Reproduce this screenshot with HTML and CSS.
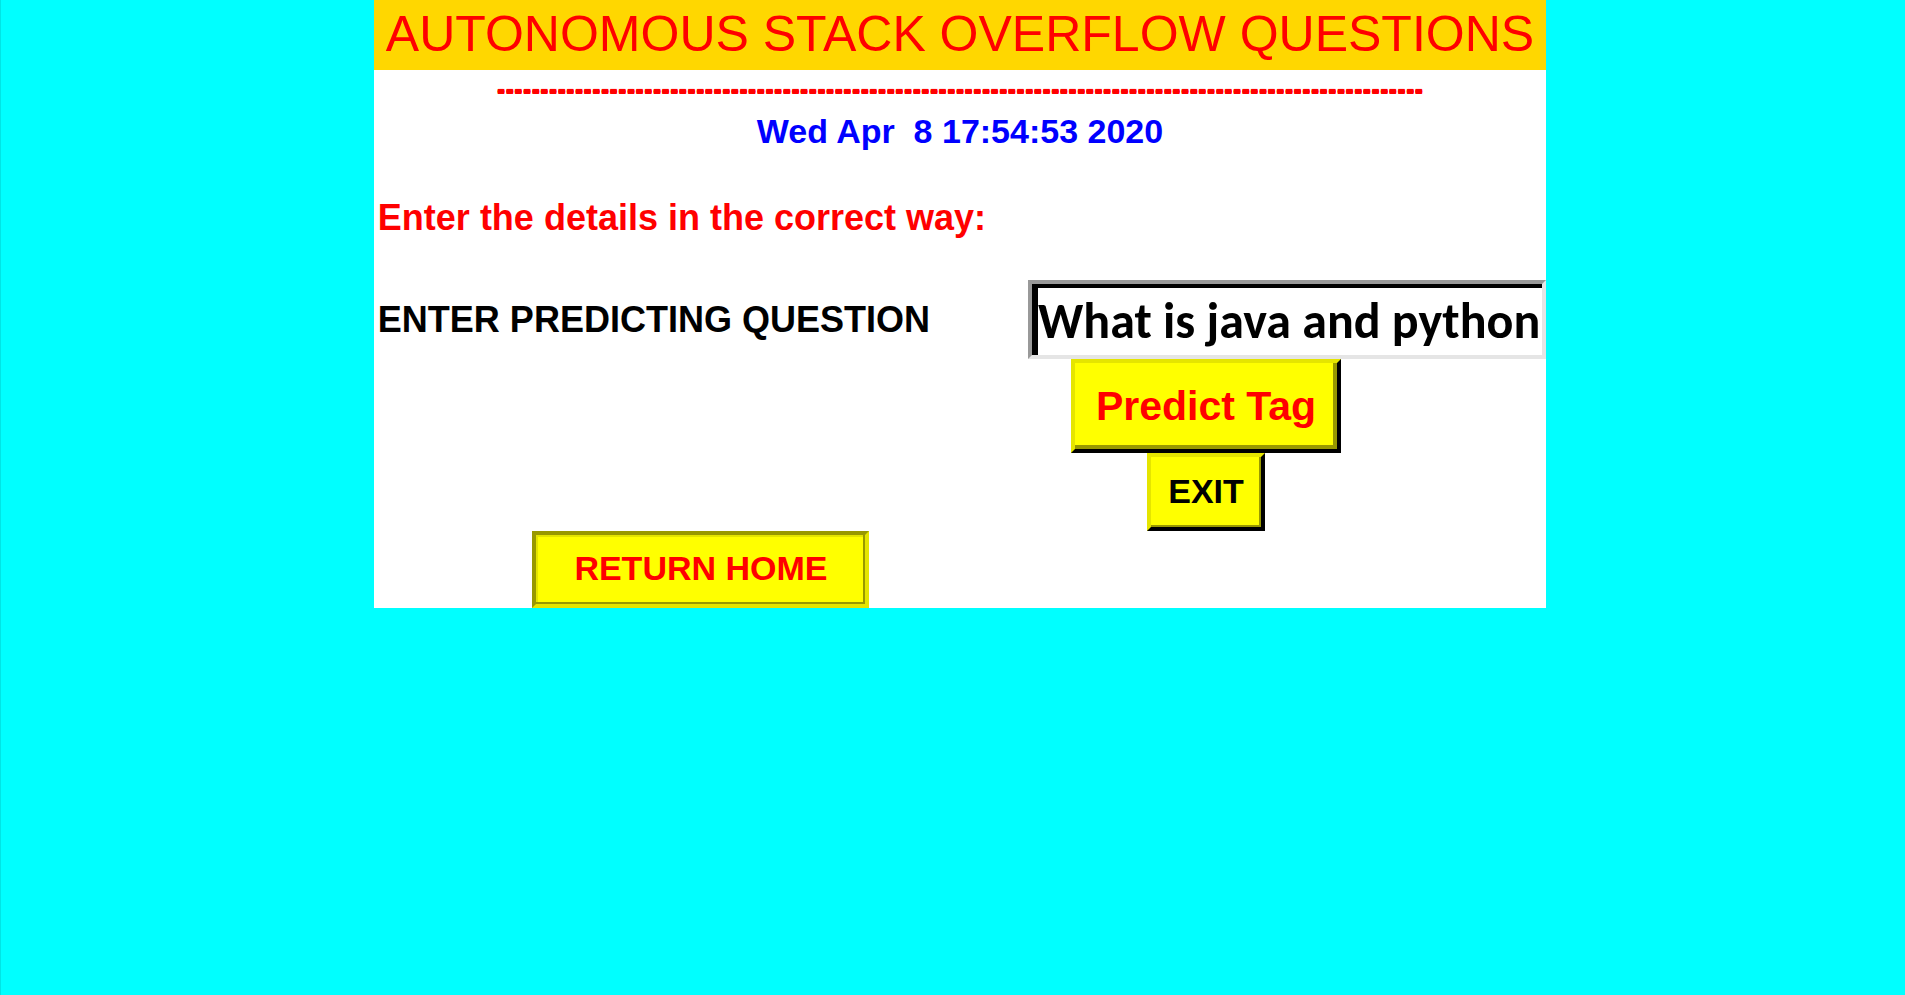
FILE: index.html
```html
<!DOCTYPE html>
<html lang="en">
<head>
<meta charset="utf-8">
<title>Autonomous Stack Overflow Questions</title>
<link rel="stylesheet" href="styles.css">
</head>
<body>
<main class="panel">
  <h1 class="title">AUTONOMOUS STACK OVERFLOW QUESTIONS</h1>
  <div class="rule">-----------------------------------------------------------------------------------------------------------</div>
  <time class="clock" datetime="2020-04-08T17:54:53">Wed Apr  8 17:54:53 2020</time>
  <form class="form">
    <p class="hint">Enter the details in the correct way:</p>
    <label class="label" for="question">ENTER PREDICTING QUESTION</label>
    <input class="field" id="question" type="text" value="What is java and python">
    <button class="button predict" type="button">Predict Tag</button>
    <button class="button exit" type="button">EXIT</button>
    <button class="button home" type="button">RETURN HOME</button>
  </form>
</main>
</body>
</html>
```

FILE: styles.css
```css
* {
  box-sizing: border-box;
}

body {
  margin: 0;
  min-height: 100vh;
  padding-left: 14px;
  border-left: 1px solid #00e5e5;
  background: #00ffff;
  font-family: "Liberation Sans", Arial, sans-serif;
  font-weight: bold;
}

.panel {
  width: fit-content;
  margin: 0 auto;
  background: #ffffff;
}

.title {
  margin: 0;
  padding: 6px 12px 8px;
  background: #ffd700;
  color: #ff0000;
  font-size: 50px;
  line-height: 56px;
  font-weight: normal;
  text-align: center;
  white-space: nowrap;
}

.rule {
  color: #ff0000;
  font-size: 26px;
  line-height: 36px;
  text-align: center;
  white-space: nowrap;
  text-shadow: 0 1px #ff0000, 0 2px #ff0000;
}

.clock {
  display: block;
  color: #0000ff;
  font-size: 34px;
  line-height: 50px;
  text-align: center;
  white-space: pre;
}

/* The heading sets the panel width; the form only fills it. */
.form {
  display: grid;
  grid-template-columns: 654fr 356fr 162fr;
  contain: inline-size;
}

.hint {
  grid-column: 1 / -1;
  margin: 0;
  padding: 40px 0 40px 4px;
  color: #ff0000;
  font-size: 36px;
  line-height: 44px;
}

.label {
  align-self: center;
  padding-left: 4px;
  color: #000000;
  font-size: 36px;
  line-height: 40px;
}

.field {
  grid-column: 2 / -1;
  width: 100%;
  min-width: 0;
  height: 79px;
  padding: 2px 0 0 6px;
  border: 4px solid;
  border-color: #999999 #e5e5e5 #e5e5e5 #999999;
  border-radius: 0;
  outline: 0;
  background: #ffffff;
  box-shadow: inset 6px 4px #000000;
  color: #000000;
  font-family: Carlito, Lato, sans-serif;
  font-size: 50px;
  font-weight: bold;
}

.button {
  justify-self: center;
  border: 4px solid;
  border-color: #e5e500 #000000 #000000 #e5e500;
  border-radius: 0;
  background: #ffff00;
  box-shadow: inset -4px -4px #999900;
  color: #000000;
  font-family: inherit;
  font-size: 34px;
  font-weight: bold;
  line-height: 38px;
}

.predict {
  grid-column: 2;
  padding: 19px 21px;
  color: #ff0000;
  font-size: 41px;
  line-height: 48px;
}

.exit {
  grid-column: 2;
  padding: 15px 17px 17px;
  box-shadow: inset -2px -2px #999900;
}

.home {
  grid-column: 1;
  padding: 14px 38px 17px;
  border-color: #999900 #e5e500 #e5e500 #999900;
  box-shadow: inset -2px -2px #999900, inset 2px 2px #e5e500;
  color: #ff0000;
}
```
